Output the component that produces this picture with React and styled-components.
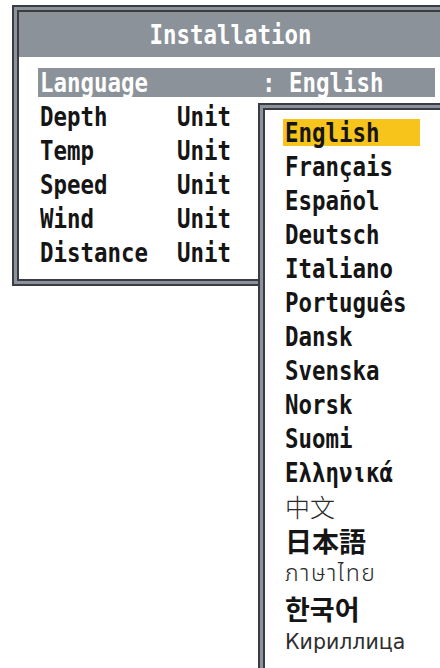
import React from "react";
import styled, { createGlobalStyle } from "styled-components";

const Global = createGlobalStyle`
  html, body { margin: 0; padding: 0; background: #ffffff; overflow: hidden; }
  body { width: 440px; height: 668px; font-family: "DejaVu Sans Mono", monospace; }
`;

const DARK = "#3b3c43";
const GRAY = "#8b9299";

const Screen = styled.div`
  position: relative;
  width: 440px;
  height: 668px;
  overflow: hidden;
  padding: 5px 0 0 12px;
  box-sizing: border-box;
`;

const Frame = styled.div`
  box-sizing: border-box;
  border: 2px solid ${DARK};
  background: ${GRAY};
  padding: 3px;
  width: ${(p) => p.$w}px;
`;

const Inner = styled.div`
  border: 2px solid ${DARK};
  background: #ffffff;
  display: flex;
  flex-direction: column;
  min-height: ${(p) => p.$minH || 0}px;
`;

const TitleBar = styled.div`
  height: 45px;
  background: ${GRAY};
  display: flex;
  align-items: center;
  justify-content: center;
`;

const Mono = styled.span`
  display: inline-block;
  font-family: "DejaVu Sans Mono", monospace;
  font-weight: bold;
  font-size: 27px;
  line-height: 1;
  white-space: pre;
  color: ${(p) => p.$color || "#151515"};
  transform: scaleX(0.83);
  transform-origin: ${(p) => (p.$center ? "center" : "left")} center;
`;

const Body = styled.div`
  padding: 11px 8px 12px 19px;
  display: flex;
  flex-direction: column;
  gap: 5px;
`;

const Row = styled.div`
  height: 29px;
  display: grid;
  grid-template-columns: 137px 85px 1fr;
  align-items: center;
  padding-left: 2px;
  background: ${(p) => (p.$active ? GRAY : "transparent")};
  overflow: hidden;
`;

const Dropdown = styled.div`
  position: absolute;
  left: 258px;
  top: 103px;
`;

const List = styled.div`
  padding: 5px 0 40px 18px;
  display: flex;
  flex-direction: column;
`;

const Item = styled.div`
  height: 34px;
  display: flex;
  align-items: center;
`;

const ItemLabel = styled.div`
  width: 137px;
  height: 27px;
  display: flex;
  align-items: center;
  padding-left: 2px;
  box-sizing: border-box;
  background: ${(p) => (p.$selected ? "#f7c41b" : "transparent")};
`;

const Script = styled.span`
  font-family: ${(p) => p.$family};
  font-size: ${(p) => p.$size}px;
  font-weight: ${(p) => p.$weight};
  color: ${(p) => p.$color || "#151515"};
  line-height: 1;
  white-space: pre;
  letter-spacing: ${(p) => p.$ls || 0}px;
`;

const rows = [
  { label: "Language", unit: "", value: ": English", active: true },
  { label: "Depth", unit: "Unit" },
  { label: "Temp", unit: "Unit" },
  { label: "Speed", unit: "Unit" },
  { label: "Wind", unit: "Unit" },
  { label: "Distance", unit: "Unit" },
];

const langs = [
  { t: "English", mono: true },
  { t: "Français", mono: true },
  { t: "Español", mono: true },
  { t: "Deutsch", mono: true },
  { t: "Italiano", mono: true },
  { t: "Português", mono: true },
  { t: "Dansk", mono: true },
  { t: "Svenska", mono: true },
  { t: "Norsk", mono: true },
  { t: "Suomi", mono: true },
  { t: "Ελληνικά", mono: true },
  { t: "中文", family: '"Noto Sans CJK SC", sans-serif', size: 25, weight: 300, color: "#2a2a2a" },
  { t: "日本語", family: '"Noto Sans CJK JP", sans-serif', size: 27, weight: 700 },
  { t: "ภาษาไทย", family: '"Noto Sans Thai", "Noto Sans", "DejaVu Sans", sans-serif', size: 23, weight: 300, color: "#2a2a2a", ls: 1.5 },
  { t: "한국어", family: '"Noto Sans CJK KR", sans-serif', size: 27, weight: 700 },
  { t: "Кириллица", family: '"DejaVu Sans", sans-serif', size: 20.5, weight: 400, color: "#2e2e2e" },
];

export default function App() {
  return (
    <>
      <Global />
      <Screen>
        <Frame $w={438}>
          <Inner>
            <TitleBar>
              <Mono $color="#ffffff" $center>Installation</Mono>
            </TitleBar>
            <Body>
              {rows.map((r) => (
                <Row key={r.label} $active={r.active}>
                  <Mono $color={r.active ? "#ffffff" : undefined}>{r.label}</Mono>
                  <Mono>{r.unit}</Mono>
                  <Mono $color={r.active ? "#ffffff" : undefined}>{r.value || ""}</Mono>
                </Row>
              ))}
            </Body>
          </Inner>
        </Frame>
        <Dropdown>
          <Frame $w={200}>
            <Inner $minH={600}>
              <List>
                {langs.map((l, i) => (
                  <Item key={l.t}>
                    <ItemLabel $selected={i === 0}>
                      {l.mono ? (
                        <Mono>{l.t}</Mono>
                      ) : (
                        <Script $family={l.family} $size={l.size} $weight={l.weight} $color={l.color} $ls={l.ls}>
                          {l.t}
                        </Script>
                      )}
                    </ItemLabel>
                  </Item>
                ))}
              </List>
            </Inner>
          </Frame>
        </Dropdown>
      </Screen>
    </>
  );
}
